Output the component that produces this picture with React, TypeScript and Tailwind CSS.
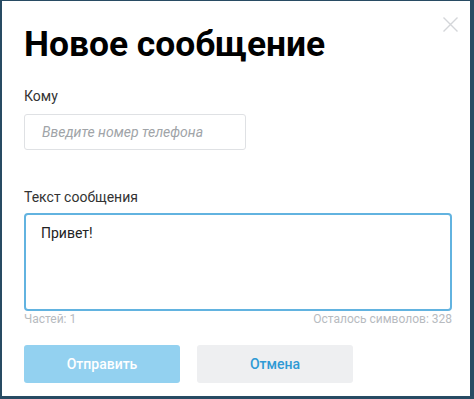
import React from "react";

export default function App() {
  return (
    <div
      className="w-[474px] h-[399px] bg-[#284b63] pt-px pl-[2px] pr-[4px] pb-[3px] box-border"
      style={{ fontFamily: "Roboto, 'Liberation Sans', sans-serif" }}
    >
      <div className="relative w-full h-full bg-white pl-[22px] pr-[18px] pt-[23px]">
        <button className="absolute left-[441px] top-[16px] w-[15px] h-[15px]" aria-label="close">
          <svg viewBox="0 0 15 15" width="15" height="15">
            <path d="M0.5 0.5 L14.5 14.5 M14.5 0.5 L0.5 14.5" stroke="#d4d6d9" strokeWidth="1.4" />
          </svg>
        </button>
        <h1 className="text-[35.4px] leading-[40px] font-bold text-black">Новое сообщение</h1>
        <div className="mt-[22px] text-[14px] leading-[20px] text-[#333]">Кому</div>
        <div className="mt-[8px] w-[222px] h-[36px] border border-[#dfe1e4] rounded-[3px] flex items-center pl-[17px]">
          <span className="italic text-[14px] text-[#a0a4a8]">Введите номер телефона</span>
        </div>
        <div className="mt-[37px] text-[14px] leading-[20px] text-[#333]">Текст сообщения</div>
        <div className="mt-[6px] w-[428px] h-[98px] border-2 border-[#62b3e0] rounded-[4px] pl-[15px] pt-[6px]">
          <span className="text-[14px] leading-[20px] text-[#222]">Привет!</span>
        </div>
        <div className="w-[428px] flex justify-between text-[12px] leading-[16px] text-[#b7bbbf]">
          <span>Частей: 1</span>
          <span>Осталось символов: 328</span>
        </div>
        <div className="mt-[18px] flex gap-[17px]">
          <div className="w-[156px] h-[38px] rounded-[3px] bg-[#93d1f0] flex items-center justify-center text-white text-[14px] font-medium">
            Отправить
          </div>
          <div className="w-[156px] h-[38px] rounded-[3px] bg-[#eeeff1] flex items-center justify-center text-[#2f9ad5] text-[14px] font-medium">
            Отмена
          </div>
        </div>
      </div>
    </div>
  );
}
